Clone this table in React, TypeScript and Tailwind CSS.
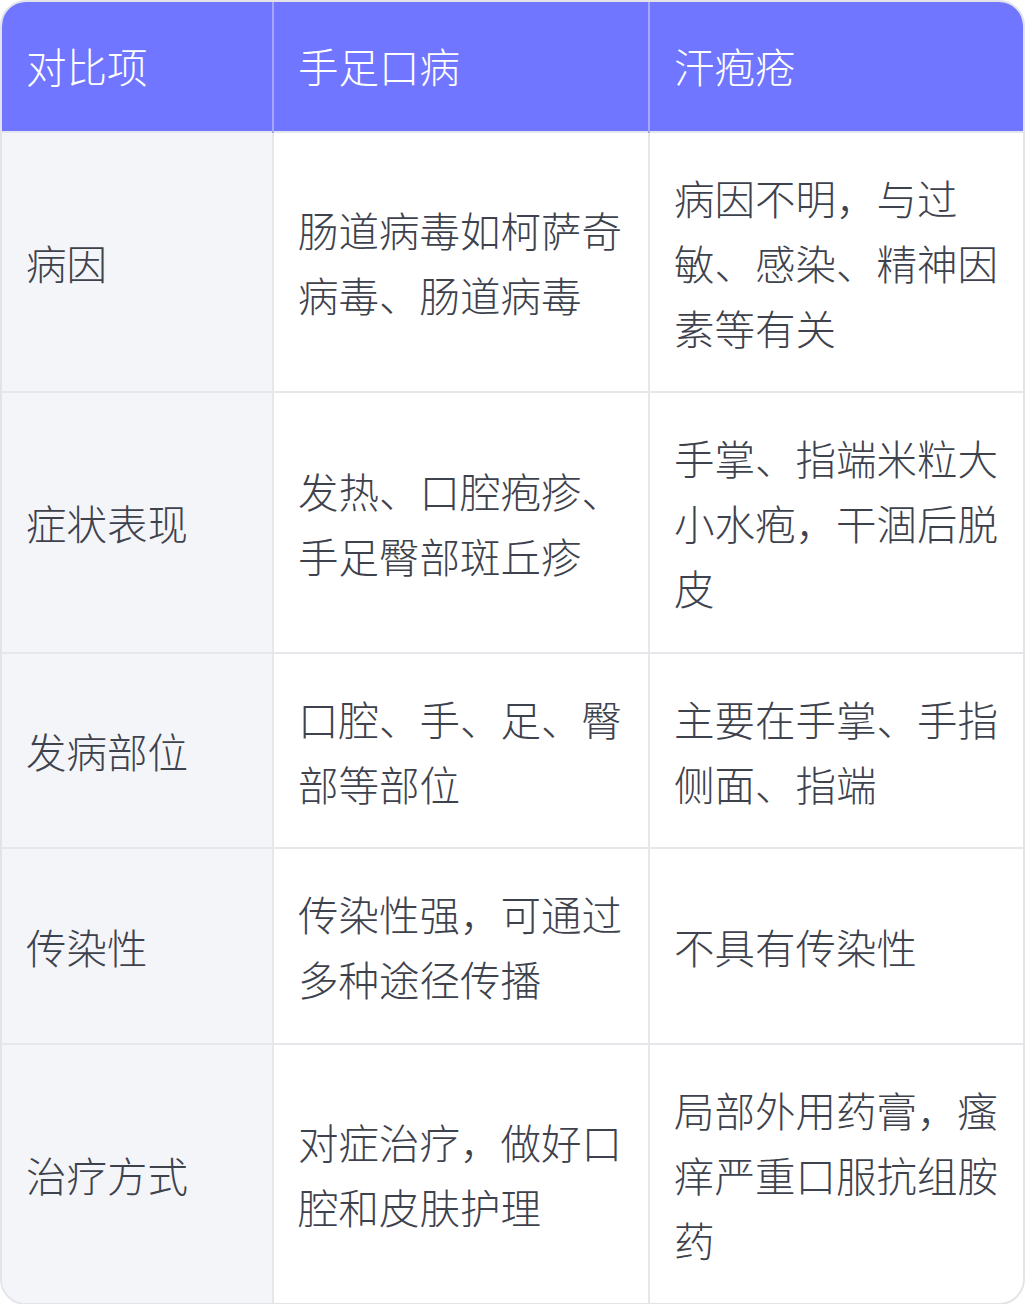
const rows: [string, string, string][] = [
  ['病因', '肠道病毒如柯萨奇病毒、肠道病毒', '病因不明，与过敏、感染、精神因素等有关'],
  ['症状表现', '发热、口腔疱疹、手足臀部斑丘疹', '手掌、指端米粒大小水疱，干涸后脱皮'],
  ['发病部位', '口腔、手、足、臀部等部位', '主要在手掌、手指侧面、指端'],
  ['传染性', '传染性强，可通过多种途径传播', '不具有传染性'],
  ['治疗方式', '对症治疗，做好口腔和皮肤护理', '局部外用药膏，瘙痒严重口服抗组胺药'],
];

export default function App() {
  return (
    <div className="w-[1025px] bg-white font-['Noto_Sans_CJK_SC','Noto_Sans',sans-serif] font-light">
      <div className="overflow-hidden rounded-[26px] border-2 border-[#e3e4e8]">
        <table className="w-full table-fixed border-collapse text-[40.5px] leading-[1.6]">
          <colgroup>
            <col className="w-[271px]" />
            <col className="w-[376px]" />
            <col />
          </colgroup>
          <thead>
            <tr className="bg-[#7076ff] text-white">
              <th className="h-[130px] px-6 text-left font-light">对比项</th>
              <th className="border-l-2 border-[#a4a7ff] px-6 text-left font-light">手足口病</th>
              <th className="border-l-2 border-[#a4a7ff] px-6 text-left font-light">汗疱疮</th>
            </tr>
          </thead>
          <tbody className="text-[#3e424d]">
            {rows.map(([item, hfmd, pompholyx]) => (
              <tr key={item} className="border-t-2 border-[#e6e7eb]">
                <td className="bg-[#f4f5f9] px-6 pt-[33px] pb-[31px] align-middle">{item}</td>
                <td className="border-l-2 border-[#e6e7eb] px-6 pt-[33px] pb-[31px] align-middle">{hfmd}</td>
                <td className="border-l-2 border-[#e6e7eb] px-6 pt-[33px] pb-[31px] align-middle">{pompholyx}</td>
              </tr>
            ))}
          </tbody>
        </table>
      </div>
    </div>
  );
}
